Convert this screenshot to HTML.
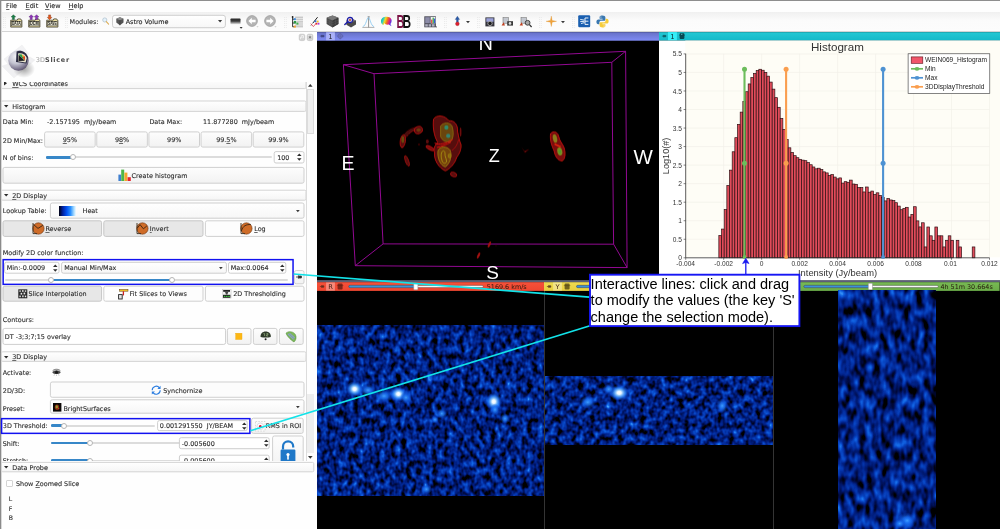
<!DOCTYPE html><html><head><meta charset="utf-8"><title>3D Slicer</title><style>
html,body{margin:0;padding:0}
body{width:1000px;height:529px;position:relative;overflow:hidden;background:#fefefe;font-family:"DejaVu Sans","Liberation Sans",sans-serif;font-size:6.43px;color:#2a2a2a}
.a{position:absolute;box-sizing:border-box}
.t{position:absolute;white-space:nowrap;line-height:10px;height:10px;-webkit-text-stroke:0.1px currentColor}
.btn{position:absolute;box-sizing:border-box;border:1px solid #d2d2d2;border-radius:2px;background:linear-gradient(#fdfdfd,#f3f3f3)}
.btn.on{background:#e3e3e3;border-color:#c4c4c4}
.in{position:absolute;box-sizing:border-box;border:1px solid #d0d0d0;border-radius:2px;background:#fff}
.hd{position:absolute;box-sizing:border-box;border:1px solid #d6d6d6;border-radius:1.5px;background:linear-gradient(#fff,#f6f6f6)}
.trk{position:absolute;height:2px;border-radius:1px;background:#dcdcdc}
.fil{position:absolute;height:2.6px;border-radius:1.2px;background:#3787c8}
.knob{position:absolute;width:6px;height:6px;border-radius:50%;background:#fff;border:1px solid #b4b4b4;box-sizing:border-box}
u{text-decoration:underline;text-decoration-thickness:0.6px;text-underline-offset:1px;text-decoration-color:#6a6a6a}
svg{position:absolute;overflow:visible}
</style></head><body><div style="position:absolute;left:0;top:0;width:1000px;height:529px;will-change:transform">
<svg style="left:0;top:0" width="0" height="0"><defs><linearGradient id="gB" x1="0" y1="0" x2="0" y2="1"><stop offset="0" stop-color="#fdfdfd"/><stop offset="1" stop-color="#f2f2f2"/></linearGradient><linearGradient id="gI" x1="0" y1="0" x2="0" y2="1"><stop offset="0" stop-color="#ffffff"/><stop offset="1" stop-color="#f7f7f7"/></linearGradient><linearGradient id="gH" x1="0" y1="0" x2="0" y2="1"><stop offset="0" stop-color="#ffffff"/><stop offset="1" stop-color="#f5f5f5"/></linearGradient></defs></svg>
<div class="a" style="left:0px;top:0px;width:1000px;height:1px;background:#8e8e8e"></div>
<div class="a" style="left:0px;top:1px;width:1px;height:528px;background:#8a8a8a"></div>
<div class="a" style="left:1px;top:1px;width:1px;height:528px;background:#d9d9d9"></div>
<div class="t" style="left:6.1px;top:1.3000000000000007px;font-size:6.5px;color:#1e1e1e"><u>F</u>ile</div>
<div class="t" style="left:25.6px;top:1.3000000000000007px;font-size:6.5px;color:#1e1e1e"><u>E</u>dit</div>
<div class="t" style="left:45.1px;top:1.3000000000000007px;font-size:6.5px;color:#1e1e1e"><u>V</u>iew</div>
<div class="t" style="left:68.6px;top:1.3000000000000007px;font-size:6.5px;color:#1e1e1e"><u>H</u>elp</div>
<div class="a" style="left:2px;top:11.6px;width:998px;height:19.4px;background:linear-gradient(#f0f0f0,#fbfbfb 45%,#fcfcfc)"></div>
<div class="a" style="left:2px;top:31px;width:998px;height:1px;background:#d4d4d4"></div>
<svg style="left:3px;top:16.5px" width="3" height="11" viewBox="0 0 3 11"><g fill="#e6e6e6"><rect x="0" y="0" width="0.9" height="0.9"/><rect x="0" y="2" width="0.9" height="0.9"/><rect x="0" y="4" width="0.9" height="0.9"/><rect x="0" y="6" width="0.9" height="0.9"/><rect x="0" y="8" width="0.9" height="0.9"/><rect x="0" y="10" width="0.9" height="0.9"/><rect x="1.8" y="0" width="0.9" height="0.9"/><rect x="1.8" y="2" width="0.9" height="0.9"/><rect x="1.8" y="4" width="0.9" height="0.9"/><rect x="1.8" y="6" width="0.9" height="0.9"/><rect x="1.8" y="8" width="0.9" height="0.9"/><rect x="1.8" y="10" width="0.9" height="0.9"/></g></svg>
<svg style="left:65px;top:16.5px" width="3" height="11" viewBox="0 0 3 11"><g fill="#e6e6e6"><rect x="0" y="0" width="0.9" height="0.9"/><rect x="0" y="2" width="0.9" height="0.9"/><rect x="0" y="4" width="0.9" height="0.9"/><rect x="0" y="6" width="0.9" height="0.9"/><rect x="0" y="8" width="0.9" height="0.9"/><rect x="0" y="10" width="0.9" height="0.9"/><rect x="1.8" y="0" width="0.9" height="0.9"/><rect x="1.8" y="2" width="0.9" height="0.9"/><rect x="1.8" y="4" width="0.9" height="0.9"/><rect x="1.8" y="6" width="0.9" height="0.9"/><rect x="1.8" y="8" width="0.9" height="0.9"/><rect x="1.8" y="10" width="0.9" height="0.9"/></g></svg>
<svg style="left:283.5px;top:16.5px" width="3" height="11" viewBox="0 0 3 11"><g fill="#e6e6e6"><rect x="0" y="0" width="0.9" height="0.9"/><rect x="0" y="2" width="0.9" height="0.9"/><rect x="0" y="4" width="0.9" height="0.9"/><rect x="0" y="6" width="0.9" height="0.9"/><rect x="0" y="8" width="0.9" height="0.9"/><rect x="0" y="10" width="0.9" height="0.9"/><rect x="1.8" y="0" width="0.9" height="0.9"/><rect x="1.8" y="2" width="0.9" height="0.9"/><rect x="1.8" y="4" width="0.9" height="0.9"/><rect x="1.8" y="6" width="0.9" height="0.9"/><rect x="1.8" y="8" width="0.9" height="0.9"/><rect x="1.8" y="10" width="0.9" height="0.9"/></g></svg>
<svg style="left:416.5px;top:16.5px" width="3" height="11" viewBox="0 0 3 11"><g fill="#e6e6e6"><rect x="0" y="0" width="0.9" height="0.9"/><rect x="0" y="2" width="0.9" height="0.9"/><rect x="0" y="4" width="0.9" height="0.9"/><rect x="0" y="6" width="0.9" height="0.9"/><rect x="0" y="8" width="0.9" height="0.9"/><rect x="0" y="10" width="0.9" height="0.9"/><rect x="1.8" y="0" width="0.9" height="0.9"/><rect x="1.8" y="2" width="0.9" height="0.9"/><rect x="1.8" y="4" width="0.9" height="0.9"/><rect x="1.8" y="6" width="0.9" height="0.9"/><rect x="1.8" y="8" width="0.9" height="0.9"/><rect x="1.8" y="10" width="0.9" height="0.9"/></g></svg>
<svg style="left:443.5px;top:16.5px" width="3" height="11" viewBox="0 0 3 11"><g fill="#e6e6e6"><rect x="0" y="0" width="0.9" height="0.9"/><rect x="0" y="2" width="0.9" height="0.9"/><rect x="0" y="4" width="0.9" height="0.9"/><rect x="0" y="6" width="0.9" height="0.9"/><rect x="0" y="8" width="0.9" height="0.9"/><rect x="0" y="10" width="0.9" height="0.9"/><rect x="1.8" y="0" width="0.9" height="0.9"/><rect x="1.8" y="2" width="0.9" height="0.9"/><rect x="1.8" y="4" width="0.9" height="0.9"/><rect x="1.8" y="6" width="0.9" height="0.9"/><rect x="1.8" y="8" width="0.9" height="0.9"/><rect x="1.8" y="10" width="0.9" height="0.9"/></g></svg>
<svg style="left:476.5px;top:16.5px" width="3" height="11" viewBox="0 0 3 11"><g fill="#e6e6e6"><rect x="0" y="0" width="0.9" height="0.9"/><rect x="0" y="2" width="0.9" height="0.9"/><rect x="0" y="4" width="0.9" height="0.9"/><rect x="0" y="6" width="0.9" height="0.9"/><rect x="0" y="8" width="0.9" height="0.9"/><rect x="0" y="10" width="0.9" height="0.9"/><rect x="1.8" y="0" width="0.9" height="0.9"/><rect x="1.8" y="2" width="0.9" height="0.9"/><rect x="1.8" y="4" width="0.9" height="0.9"/><rect x="1.8" y="6" width="0.9" height="0.9"/><rect x="1.8" y="8" width="0.9" height="0.9"/><rect x="1.8" y="10" width="0.9" height="0.9"/></g></svg>
<svg style="left:538.5px;top:16.5px" width="3" height="11" viewBox="0 0 3 11"><g fill="#e6e6e6"><rect x="0" y="0" width="0.9" height="0.9"/><rect x="0" y="2" width="0.9" height="0.9"/><rect x="0" y="4" width="0.9" height="0.9"/><rect x="0" y="6" width="0.9" height="0.9"/><rect x="0" y="8" width="0.9" height="0.9"/><rect x="0" y="10" width="0.9" height="0.9"/><rect x="1.8" y="0" width="0.9" height="0.9"/><rect x="1.8" y="2" width="0.9" height="0.9"/><rect x="1.8" y="4" width="0.9" height="0.9"/><rect x="1.8" y="6" width="0.9" height="0.9"/><rect x="1.8" y="8" width="0.9" height="0.9"/><rect x="1.8" y="10" width="0.9" height="0.9"/></g></svg>
<svg style="left:571.5px;top:16.5px" width="3" height="11" viewBox="0 0 3 11"><g fill="#e6e6e6"><rect x="0" y="0" width="0.9" height="0.9"/><rect x="0" y="2" width="0.9" height="0.9"/><rect x="0" y="4" width="0.9" height="0.9"/><rect x="0" y="6" width="0.9" height="0.9"/><rect x="0" y="8" width="0.9" height="0.9"/><rect x="0" y="10" width="0.9" height="0.9"/><rect x="1.8" y="0" width="0.9" height="0.9"/><rect x="1.8" y="2" width="0.9" height="0.9"/><rect x="1.8" y="4" width="0.9" height="0.9"/><rect x="1.8" y="6" width="0.9" height="0.9"/><rect x="1.8" y="8" width="0.9" height="0.9"/><rect x="1.8" y="10" width="0.9" height="0.9"/></g></svg>
<svg style="left:9.8px;top:14.4px" width="12.6" height="14" viewBox="0 0 12.6 14"><path d="M0.7 13.1V6.2H7.2L7.8 4.9H10.6L11.4 6.2H11.9V13.1Z" fill="#e9dc9c" stroke="#4c4838" stroke-width="0.85"/><rect x="1.5" y="7.5" width="9.6" height="4.4" fill="#efecd8" stroke="#3a3a34" stroke-width="0.55"/><text x="6.3" y="11.4" font-size="4.9" font-family="Liberation Sans,sans-serif" font-weight="bold" text-anchor="middle" fill="#111" textLength="8.6" lengthAdjust="spacingAndGlyphs">DATA</text><path d="M3.4 0.7L5.699999999999999 3L4.4 3.1V5.5H2.4V3.1L1.1 3Z" fill="#1a8048" stroke="#0c4a26" stroke-width="0.4"/></svg>
<svg style="left:27.8px;top:14.4px" width="12.6" height="14" viewBox="0 0 12.6 14"><path d="M0.7 13.1V6.2H7.2L7.8 4.9H10.6L11.4 6.2H11.9V13.1Z" fill="#e9dc9c" stroke="#4c4838" stroke-width="0.85"/><rect x="1.5" y="7.5" width="9.6" height="4.4" fill="#efecd8" stroke="#3a3a34" stroke-width="0.55"/><text x="6.3" y="11.4" font-size="4.9" font-family="Liberation Sans,sans-serif" font-weight="bold" text-anchor="middle" fill="#111" textLength="8.6" lengthAdjust="spacingAndGlyphs">DCM</text><path d="M3.2 0.7L5.5 3L4.2 3.1V5.5H2.2V3.1L0.9000000000000004 3Z" fill="#8e35b8" stroke="#521870" stroke-width="0.4"/><path d="M8.6 0.7L10.899999999999999 3L9.6 3.1V5.5H7.6V3.1L6.3 3Z" fill="#8e35b8" stroke="#521870" stroke-width="0.4"/></svg>
<svg style="left:45.8px;top:14.4px" width="12.6" height="14" viewBox="0 0 12.6 14"><path d="M0.7 13.1V6.2H7.2L7.8 4.9H10.6L11.4 6.2H11.9V13.1Z" fill="#e9dc9c" stroke="#4c4838" stroke-width="0.85"/><rect x="1.5" y="7.5" width="9.6" height="4.4" fill="#efecd8" stroke="#3a3a34" stroke-width="0.55"/><text x="6.3" y="11.4" font-size="4.9" font-family="Liberation Sans,sans-serif" font-weight="bold" text-anchor="middle" fill="#111" textLength="8.6" lengthAdjust="spacingAndGlyphs">SAVE</text><path d="M3.6 5.7L1.3000000000000003 3.4L2.6 3.3V0.9H4.6V3.3L5.9 3.4Z" fill="#e8581c" stroke="#7a2a08" stroke-width="0.4"/></svg>
<div class="t" style="left:69.6px;top:17.4px;font-size:6.45px;color:#333">Modules:</div>
<svg style="left:101.8px;top:17px" width="7.8" height="8.7" viewBox="0 0 9 10"><circle cx="3.2" cy="3.4" r="2.4" fill="#e4f2fb" stroke="#a9bccb" stroke-width="0.8"/><path d="M5 5.3L7.6 8.2" stroke="#dcae58" stroke-width="1.3" stroke-linecap="round"/></svg>
<svg style="left:111px;top:14px" width="116" height="15" viewBox="0 0 116 15"><rect x="1.50" y="1.30" width="112.90" height="12.40" rx="2.4" fill="url(#gI)" stroke="#cbcbcb" stroke-width="0.95"/></svg>
<svg style="left:115.6px;top:17px" width="7.8" height="8.6" viewBox="0 0 9 10"><path d="M4.5 0.3L8.7 2V6.4L4.5 9.7L0.3 6.4V2Z" fill="#555"/><path d="M4.5 0.3L8.7 2L4.5 3.8L0.3 2Z" fill="#8c8c8c"/><path d="M4.5 3.8V9.7" stroke="#2a2a2a" stroke-width="0.5"/></svg>
<div class="t" style="left:125.69999999999999px;top:17.200000000000003px;font-size:6.45px;color:#222">Astro Volume</div>
<svg style="left:217.71px;top:20.46px" width="4.18" height="2.4699999999999998" viewBox="0 0 4.4 2.6"><path d="M0 0H4.4L2.2 2.6Z" fill="#3a3a3a"/></svg>
<svg style="left:229.5px;top:17.5px" width="14" height="12" viewBox="0 0 14 12"><defs><linearGradient id="hg" x1="0" y1="0" x2="0" y2="1"><stop offset="0" stop-color="#2a2a2a"/><stop offset="0.45" stop-color="#3a3a3a"/><stop offset="1" stop-color="#e4e4e4"/></linearGradient></defs><rect x="0.5" y="0.6" width="10" height="5.6" rx="0.6" fill="url(#hg)"/><path d="M9.6 9H12.6L11.1 10.8Z" fill="#333"/></svg>
<svg style="left:246px;top:15px" width="14" height="14" viewBox="0 0 14 14"><circle cx="6" cy="6" r="5.4" fill="#b4b4b4" stroke="#9a9a9a" stroke-width="0.7"/><g ><path d="M2.4 6L5.8 2.8V4.8H9.6V7.2H5.8V9.2Z" fill="#fff"/></g><path d="M10.4 11.2H12.6L11.5 12.4Z" fill="#c8c8c8"/></svg>
<svg style="left:264px;top:15px" width="14" height="14" viewBox="0 0 14 14"><circle cx="6" cy="6" r="5.4" fill="#b4b4b4" stroke="#9a9a9a" stroke-width="0.7"/><g transform="translate(12,0) scale(-1,1)"><path d="M2.4 6L5.8 2.8V4.8H9.6V7.2H5.8V9.2Z" fill="#fff"/></g><path d="M10.4 11.2H12.6L11.5 12.4Z" fill="#c8c8c8"/></svg>
<svg style="left:290.5px;top:15.5px" width="13" height="12" viewBox="0 0 13 12"><path d="M1.6 0.6V10.8H3.4M1.6 3.2H3.4M1.6 7H3.4" stroke="#222" stroke-width="0.9" fill="none"/><circle cx="1.6" cy="1" r="0.9" fill="#222"/><g stroke="#9a9a9a" stroke-width="0.7"><path d="M4 1.2H12M4 3.2H12M5.6 5.2H12M5.6 7H12M4 9H12M4 10.8H12"/></g><rect x="2.8" y="2.2" width="2" height="2" fill="#3a8be0"/><rect x="2.8" y="5" width="2.4" height="2.6" fill="#2e9a44"/><rect x="5.4" y="6.6" width="2" height="2" fill="#40b050"/><rect x="2.8" y="9.6" width="2" height="2" fill="#f0a030"/></svg>
<svg style="left:309.5px;top:16px" width="11" height="12" viewBox="0 0 11 12"><path d="M1 9.4L7.6 1.2" stroke="#222" stroke-width="1"/><path d="M0.8 7.6L3.4 10.6L6.4 7" stroke="#e04050" stroke-width="0.8" fill="#fff"/><rect x="4.6" y="4.4" width="1.8" height="1.8" fill="#2a6ae0"/><rect x="6.8" y="4.6" width="1.8" height="1.8" fill="#f0c020"/><rect x="5.6" y="6.8" width="1.8" height="1.8" fill="#e03030"/><rect x="7.8" y="6.8" width="1.6" height="1.8" fill="#b030e0"/></svg>
<svg style="left:326px;top:14.8px" width="13" height="13" viewBox="0 0 13 13"><path d="M6.5 0.4L12.4 2.8V9L6.5 12.6L0.6 9V2.8Z" fill="#4c4c4c"/><path d="M6.5 0.4L12.4 2.8L6.5 5.4L0.6 2.8Z" fill="#7a7a7a"/><path d="M6.5 5.4V12.6L12.4 9V2.8Z" fill="#3a3a3a"/><path d="M0.6 5L6.5 7.6L12.4 5M0.6 7L6.5 9.8L12.4 7M3.4 1.6V10.8M9.6 1.6V10.8" stroke="#666" stroke-width="0.35" fill="none"/></svg>
<svg style="left:344px;top:15.5px" width="13" height="13" viewBox="0 0 13 13"><path d="M7 2.6L12 4.4V8.6L7 11.6L2.4 8.8V4.4Z" fill="#4a4a4a"/><path d="M7 2.6L12 4.4L7 6.4L2.4 4.4Z" fill="#777"/><circle cx="6" cy="4" r="2.7" fill="#c9c9d6" stroke="#1a1aa8" stroke-width="1.2"/><circle cx="6" cy="4" r="0.9" fill="#c03030"/><path d="M3.8 5.8L0.8 8.6" stroke="#1a1aa8" stroke-width="1.4" stroke-linecap="round"/></svg>
<svg style="left:361.5px;top:15.5px" width="13" height="13" viewBox="0 0 13 13"><path d="M0.4 11.4H12.4" stroke="#9a9a9a" stroke-width="0.8"/><path d="M6.6 0.8V11.4" stroke="#777" stroke-width="0.8"/><path d="M5.6 0.9H7.8" stroke="#444" stroke-width="0.6"/><path d="M0.8 10.6C4 10 4.8 1.6 6.4 1.6C8 1.6 8.8 10 12 10.6" stroke="#8ecbf0" stroke-width="0.9" fill="none"/></svg>
<svg style="left:379.5px;top:15.5px" width="13" height="12" viewBox="0 0 13 12"><defs><linearGradient id="rb" x1="0" y1="0" x2="1" y2="0.3"><stop offset="0" stop-color="#20c040"/><stop offset="0.25" stop-color="#20c8d8"/><stop offset="0.45" stop-color="#f0e020"/><stop offset="0.65" stop-color="#f07020"/><stop offset="0.85" stop-color="#e02080"/><stop offset="1" stop-color="#6030e0"/></linearGradient></defs><path d="M1 5.2C1 2 4 0.6 7 0.8C10.6 1 12.4 3.4 11.4 6.2C11 7.4 10.2 7.6 10.6 8.6L11.6 10.2L8.6 8.6C6.4 9 5 8.2 4.2 7L3.6 9L2.4 8.6C1.4 7.6 1 6.4 1 5.2Z" fill="url(#rb)"/></svg>
<svg style="left:396.5px;top:15px" width="15" height="14" viewBox="0 0 15 14"><text x="-0.4" y="12.9" font-size="17.6" font-weight="bold" font-family="Liberation Sans,sans-serif" fill="#7a1244" textLength="8" lengthAdjust="spacingAndGlyphs">B</text><text x="5.6" y="12.9" font-size="17.6" font-weight="bold" font-family="Liberation Sans,sans-serif" fill="#111" textLength="8.6" lengthAdjust="spacingAndGlyphs">B</text></svg>
<svg style="left:424px;top:16px" width="13" height="12" viewBox="0 0 13 12"><rect x="0.3" y="0.3" width="11.6" height="11" fill="#4a4a56"/><rect x="1.2" y="1.2" width="4.6" height="6" fill="#8c8ca8"/><rect x="6.6" y="1" width="4.8" height="6.4" fill="#f4f4f4"/><rect x="7.2" y="3.6" width="1.2" height="3.6" fill="#e03030"/><rect x="8.6" y="1.6" width="1.2" height="5.6" fill="#30a040"/><rect x="10" y="2.6" width="1.2" height="4.6" fill="#3060e0"/><rect x="1.2" y="8.2" width="2.6" height="2.4" fill="#b0b0c0"/><rect x="4.6" y="8.2" width="2.6" height="2.4" fill="#b0b0c0"/><rect x="8" y="8.2" width="2.6" height="2.4" fill="#b0b0c0"/><path d="M11.6 10.6H13L12.3 11.8Z" fill="#333"/></svg>
<svg style="left:453.5px;top:15.8px" width="7" height="11" viewBox="0 0 7 11"><path d="M3.4 0.2L5.6 3.4H4.3V6.6H2.5V3.4H1.2Z" fill="#2a5aa8" stroke="#183a78" stroke-width="0.3"/><circle cx="3.4" cy="7.8" r="1.9" fill="#e02030" stroke="#8a1018" stroke-width="0.3"/></svg>
<svg style="left:465.82px;top:20.72px" width="3.9600000000000004" height="2.3400000000000003" viewBox="0 0 4.4 2.6"><path d="M0 0H4.4L2.2 2.6Z" fill="#3a3a3a"/></svg>
<svg style="left:484.5px;top:16.5px" width="10" height="10" viewBox="0 0 10 10"><rect x="0.4" y="0.4" width="9" height="9" fill="#34343c"/><rect x="1.3" y="1.2" width="7.2" height="3.6" fill="#9aa0d8"/><circle cx="5" cy="6.4" r="2.2" fill="#1c1c1c" stroke="#c8c8c8" stroke-width="0.7"/></svg>
<svg style="left:500.5px;top:16.5px" width="13" height="10" viewBox="0 0 13 10"><rect x="2" y="0.6" width="5.4" height="5.6" fill="#c4c8d0" stroke="#666" stroke-width="0.5"/><path d="M0.6 8.6L2.6 5.2L4 8.6Z" fill="#c04020"/><rect x="6.2" y="4.2" width="5.8" height="4.4" fill="#3a3a3a"/><circle cx="9" cy="6.4" r="1.3" fill="#ddd"/></svg>
<svg style="left:518.5px;top:16.5px" width="14" height="11" viewBox="0 0 14 11"><rect x="2" y="0.6" width="5.4" height="5.6" fill="#c4c8d0" stroke="#666" stroke-width="0.5"/><path d="M0.6 8.6L2.6 5.2L4 8.6Z" fill="#c04020"/><circle cx="8.6" cy="5.8" r="2.4" fill="#aaa" stroke="#333" stroke-width="0.9"/><path d="M10.4 7.6L12.6 10" stroke="#333" stroke-width="1.3"/></svg>
<svg style="left:546.3px;top:16.4px" width="10.6" height="10.6" viewBox="0 0 12 12"><path d="M6 0L7 5L12 6L7 7L6 12L5 7L0 6L5 5Z" fill="#f0a23a" stroke="#d88a22" stroke-width="0.3"/></svg>
<svg style="left:560.62px;top:20.72px" width="3.9600000000000004" height="2.3400000000000003" viewBox="0 0 4.4 2.6"><path d="M0 0H4.4L2.2 2.6Z" fill="#3a3a3a"/></svg>
<svg style="left:578px;top:15.3px" width="12.4" height="12.4" viewBox="0 0 12.4 12.4"><rect x="0.2" y="0.2" width="12" height="12" rx="1.2" fill="#1a5fb0"/><path d="M2.2 4.4L6.4 5.2M2.2 6.6L6.4 6.4M3 8.6L6.4 7.6" stroke="#d8e8f8" stroke-width="1"/><path d="M7 3H10.4M7 6.2H10.4M7 9.4H10.4M7 3V9.4" stroke="#fff" stroke-width="0.9" fill="none"/></svg>
<svg style="left:595.5px;top:15px" width="13" height="13" viewBox="0 0 13 13"><path d="M6.4 0.4C3.6 0.4 3.6 1.6 3.6 2.4V3.8H6.6V4.4H2.4C1 4.4 0.4 5.4 0.4 6.8C0.4 8.2 1 9.2 2.2 9.2H3.4V7.6C3.4 6.4 4.2 5.8 5.2 5.8H8.2C9 5.8 9.4 5.2 9.4 4.4V2.4C9.4 1.2 8.4 0.4 6.4 0.4Z" fill="#3a78b0"/><path d="M6.6 12.6C9.4 12.6 9.4 11.4 9.4 10.6V9.2H6.4V8.6H10.6C12 8.6 12.6 7.6 12.6 6.2C12.6 4.8 12 3.8 10.8 3.8H9.6V5.4C9.6 6.6 8.8 7.2 7.8 7.2H4.8C4 7.2 3.6 7.8 3.6 8.6V10.6C3.6 11.8 4.6 12.6 6.6 12.6Z" fill="#f6cc3a"/><circle cx="4.9" cy="2" r="0.55" fill="#fff"/><circle cx="8.1" cy="11" r="0.55" fill="#fff"/></svg>
<svg style="left:298px;top:33px" width="16" height="9" viewBox="298 33 16 9"><rect x="299.2" y="34.2" width="5.6" height="6.4" rx="1.5" fill="#d2d2d2" stroke="#b4b4b4" stroke-width="0.5"/><path d="M300.6 39.2V37.2H302.2M301.6 36.6V35.6H303.4V37.8H302.6" stroke="#fff" stroke-width="0.7" fill="none"/><rect x="307.2" y="34.2" width="5.6" height="6.4" rx="1.5" fill="#d2d2d2" stroke="#b0b0b0" stroke-width="0.5"/><path d="M308.4 35.6L311.6 39.2M311.6 35.6L308.4 39.2" stroke="#fff" stroke-width="1.2"/><path d="M308.9 36.1L311.1 38.7M311.1 36.1L308.9 38.7" stroke="#3a3a3a" stroke-width="0.7"/></svg>
<svg style="left:2px;top:44px" width="40" height="38" viewBox="0 0 40 38">
<defs><radialGradient id="sp" cx="0.38" cy="0.3" r="0.8"><stop offset="0" stop-color="#f4f4f8"/><stop offset="0.45" stop-color="#c4c4d2"/><stop offset="0.8" stop-color="#77708a"/><stop offset="1" stop-color="#4a4056"/></radialGradient>
<radialGradient id="sh" cx="0.5" cy="0.5" r="0.5"><stop offset="0" stop-color="#000" stop-opacity="0.35"/><stop offset="1" stop-color="#000" stop-opacity="0"/></radialGradient></defs>
<path d="M2 15L20 1L27 10L10 25Z" fill="#e4e4e8" opacity="0.45" stroke="#c8c8cc" stroke-width="0.3"/><path d="M0 22L28 13L33 16L12 34Z" fill="#dcdce0" opacity="0.4" stroke="#c8c8cc" stroke-width="0.3"/>
<ellipse cx="22" cy="25" rx="11" ry="9" fill="url(#sh)"/>
<circle cx="16.5" cy="16.5" r="10.2" fill="url(#sp)"/>
<path d="M14.6 7.4C19 5.6 24.6 8.2 26 13.6L24.4 19.6L14 18Z" fill="#2a2a40"/>
<path d="M16 9.6C19.6 8.6 23.6 10.6 24.8 14L23.6 18.4L16 17.2Z" fill="#e8e4d0"/>
<path d="M16.6 10.6L22.8 16.8L16.4 17Z" fill="#1e1e22"/><path d="M16.6 10.6L19.6 10.2L22.8 16.8Z" fill="#2aa048"/><path d="M19.6 10.2L23 12.4L22.8 16.8Z" fill="#f0a020"/><path d="M20.6 13L23 12.4L22.8 16.8Z" fill="#e04020"/>
</svg>
<div class="t" style="left:35.800000000000004px;top:54.9px;font-size:6.45px;color:#a8a8a8;letter-spacing:0.2px;font-family:"Liberation Sans",sans-serif">3D</div>
<div class="t" style="left:45.0px;top:54.9px;font-size:6.5px;color:#484848;font-weight:bold;letter-spacing:0.7px;-webkit-text-stroke:0;font-family:"Liberation Sans",sans-serif">Slicer</div>
<div class="a" style="left:0px;top:81.5px;width:316px;height:379.8px;overflow:hidden"><div class="a" style="left:0px;top:-81.5px;width:316px;height:600px">
<svg style="left:0px;top:77px" width="307" height="13" viewBox="0 0 307 13"><rect x="1.40" y="1.60" width="304.60" height="10.00" rx="1.3" fill="url(#gH)" stroke="#d2d2d2" stroke-width="0.95"/></svg>
<svg style="left:4.4px;top:81.39999999999999px" width="3" height="4.4" viewBox="0 0 3 4.4"><path d="M0 0V4.4L3 2.2Z" fill="#2a2a2a"/></svg>
<div class="t" style="left:12.2px;top:79.3px;font-size:6.45px"><u>W</u>CS Coordinates</div>
<svg style="left:0px;top:100px" width="307" height="13" viewBox="0 0 307 13"><rect x="1.40" y="1.00" width="304.60" height="10.40" rx="1.3" fill="url(#gH)" stroke="#d2d2d2" stroke-width="0.95"/></svg>
<svg style="left:3.7px;top:105.2px" width="4.4" height="2.6" viewBox="0 0 4.4 2.6"><path d="M0 0H4.4L2.2 2.6Z" fill="#2a2a2a"/></svg>
<div class="t" style="left:12.2px;top:101.9px;font-size:6.45px">Histogram</div>
<div class="t" style="left:2.8000000000000003px;top:117.30000000000001px;">Data Min:</div>
<div class="t" style="left:47.0px;top:117.30000000000001px;">-2.157195&nbsp; mJy/beam</div>
<div class="t" style="left:149.4px;top:117.30000000000001px;">Data Max:</div>
<div class="t" style="left:203.0px;top:117.30000000000001px;">11.877280&nbsp; mJy/beam</div>
<div class="t" style="left:2.8000000000000003px;top:135.6px;">2D Min/Max:</div>
<svg style="left:43px;top:130px" width="54" height="19" viewBox="0 0 54 19"><rect x="1.60" y="1.90" width="50.60" height="15.20" rx="1.8" fill="url(#gB)" stroke="#cdcdcd" stroke-width="0.95"/></svg>
<div class="t" style="left:44.6px;width:50.6px;top:134.9px;text-align:center"><u>9</u>5%</div>
<svg style="left:95px;top:130px" width="54" height="19" viewBox="0 0 54 19"><rect x="1.75" y="1.90" width="50.60" height="15.20" rx="1.8" fill="url(#gB)" stroke="#cdcdcd" stroke-width="0.95"/></svg>
<div class="t" style="left:96.75px;width:50.599999999999994px;top:134.9px;text-align:center">9<u>8</u>%</div>
<svg style="left:147px;top:130px" width="54" height="19" viewBox="0 0 54 19"><rect x="1.90" y="1.90" width="50.60" height="15.20" rx="1.8" fill="url(#gB)" stroke="#cdcdcd" stroke-width="0.95"/></svg>
<div class="t" style="left:148.9px;width:50.599999999999994px;top:134.9px;text-align:center">99%</div>
<svg style="left:200px;top:130px" width="53" height="19" viewBox="0 0 53 19"><rect x="1.05" y="1.90" width="50.60" height="15.20" rx="1.8" fill="url(#gB)" stroke="#cdcdcd" stroke-width="0.95"/></svg>
<div class="t" style="left:201.04999999999998px;width:50.599999999999994px;top:134.9px;text-align:center">99.<u>5</u>%</div>
<svg style="left:252px;top:130px" width="53" height="19" viewBox="0 0 53 19"><rect x="1.20" y="1.90" width="50.60" height="15.20" rx="1.8" fill="url(#gB)" stroke="#cdcdcd" stroke-width="0.95"/></svg>
<div class="t" style="left:253.2px;width:50.60000000000002px;top:134.9px;text-align:center">99.9%</div>
<div class="t" style="left:2.8000000000000003px;top:153.0px;">N of bins:</div>
<div class="trk" style="left:45.5px;top:156.4px;width:226.5px"></div>
<div class="fil" style="left:45.5px;top:156.1px;width:27.099999999999994px"></div>
<div class="knob" style="left:69.6px;top:154.4px"></div>
<svg style="left:273px;top:150px" width="32" height="14" viewBox="0 0 32 14"><rect x="1.20" y="1.60" width="29.80" height="11.40" rx="1.8" fill="#fff" stroke="#cbcbcb" stroke-width="0.95"/></svg>
<div class="t" style="left:277.20000000000005px;top:153.0px;">100</div>
<svg style="left:296.5px;top:153.3px" width="4.6" height="8.2" viewBox="0 0 4 7.2"><path d="M0 2.6L2 0.4L4 2.6ZM0 4.6L2 6.8L4 4.6Z" fill="#2e2e2e"/></svg>
<svg style="left:2px;top:166px" width="303" height="19" viewBox="0 0 303 19"><rect x="1.00" y="1.40" width="301.00" height="15.80" rx="1.8" fill="url(#gB)" stroke="#cdcdcd" stroke-width="0.95"/></svg>
<svg style="left:118px;top:169px" width="14" height="12.4" viewBox="0 0 14 12.4"><rect x="0.4" y="5.6" width="2.6" height="6.4" fill="#3f7fd0"/><rect x="3.2" y="0.6" width="3" height="11.4" fill="#4cb648"/><rect x="6.4" y="3.6" width="3" height="8.4" fill="#f2a62c"/><rect x="9.6" y="8.2" width="3.2" height="3.8" fill="#e4242c"/></svg>
<div class="t" style="left:131.6px;top:170.8px;">Create histogram</div>
<svg style="left:0px;top:189px" width="307" height="13" viewBox="0 0 307 13"><rect x="1.40" y="1.20" width="304.60" height="10.00" rx="1.3" fill="url(#gH)" stroke="#d2d2d2" stroke-width="0.95"/></svg>
<svg style="left:3.7px;top:194.2px" width="4.4" height="2.6" viewBox="0 0 4.4 2.6"><path d="M0 0H4.4L2.2 2.6Z" fill="#2a2a2a"/></svg>
<div class="t" style="left:12.2px;top:190.9px;font-size:6.45px"><u>2</u>D Display</div>
<div class="t" style="left:2.8000000000000003px;top:206.20000000000002px;">Lookup Table:</div>
<svg style="left:49px;top:202px" width="256" height="18" viewBox="0 0 256 18"><rect x="1.40" y="1.00" width="253.60" height="15.20" rx="1.8" fill="url(#gI)" stroke="#cbcbcb" stroke-width="0.95"/></svg>
<div class="a" style="left:58.8px;top:205.6px;width:17.200000000000003px;height:10.800000000000011px;background:linear-gradient(90deg,#000010 0%,#0020a0 22%,#0050f0 45%,#2a90ff 68%,#a8dcff 88%,#f4fbff 100%)"></div>
<div class="t" style="left:82.6px;top:206.20000000000002px;">Heat</div>
<svg style="left:296.33px;top:209.78px" width="3.74" height="2.21" viewBox="0 0 4.4 2.6"><path d="M0 0H4.4L2.2 2.6Z" fill="#3a3a3a"/></svg>
<svg style="left:2px;top:219px" width="101" height="19" viewBox="0 0 101 19"><rect x="1.00" y="1.80" width="98.60" height="15.60" rx="1.8" fill="#e7e7e7" stroke="#c4c4c4" stroke-width="0.95"/></svg>
<svg style="left:31.6px;top:222px" width="13" height="13" viewBox="0 0 13 13"><circle cx="6.4" cy="6.5" r="5.7" fill="#cf6c28" stroke="#6a3410" stroke-width="0.6"/><path d="M1 1V11.6H5" stroke="#3a2a1a" stroke-width="0.9" fill="none"/><path d="M1.4 2.4L6 6.4L10.8 3.4" stroke="#3a2412" stroke-width="0.9" fill="none"/></svg>
<div class="t" style="left:45.4px;top:224.20000000000002px;"><u>R</u>everse</div>
<svg style="left:102px;top:219px" width="102" height="19" viewBox="0 0 102 19"><rect x="1.80" y="1.80" width="99.20" height="15.60" rx="1.8" fill="#e7e7e7" stroke="#c4c4c4" stroke-width="0.95"/></svg>
<svg style="left:136px;top:222px" width="13" height="13" viewBox="0 0 13 13"><circle cx="6.4" cy="6.5" r="5.7" fill="#cf6c28" stroke="#6a3410" stroke-width="0.6"/><path d="M1 1V11.6H5" stroke="#3a2a1a" stroke-width="0.9" fill="none"/><path d="M1.4 6L4 2.6L7.4 6.8L10.8 4" stroke="#3a2412" stroke-width="0.9" fill="none"/></svg>
<div class="t" style="left:149.79999999999998px;top:224.20000000000002px;"><u>I</u>nvert</div>
<svg style="left:204px;top:219px" width="101" height="19" viewBox="0 0 101 19"><rect x="1.40" y="1.80" width="98.60" height="15.60" rx="1.8" fill="#fdfdfd" stroke="#cdcdcd" stroke-width="0.95"/></svg>
<svg style="left:240.4px;top:222px" width="13" height="13" viewBox="0 0 13 13"><circle cx="6.4" cy="6.5" r="5.7" fill="#cf6c28" stroke="#6a3410" stroke-width="0.6"/><path d="M1 1V11.6H5" stroke="#3a2a1a" stroke-width="0.9" fill="none"/><path d="M1.4 9C3 3.6 6 2.6 10.8 2.4" stroke="#3a2412" stroke-width="0.9" fill="none"/></svg>
<div class="t" style="left:254.2px;top:224.20000000000002px;"><u>L</u>og</div>
<div class="t" style="left:2.8000000000000003px;top:247.6px;">Modify 2D color function:</div>
<svg style="left:0;top:0" width="316" height="529" viewBox="0 0 316 529"><rect x="3.15" y="259.65" width="289.9" height="24.7" fill="none" stroke="#1212f0" stroke-width="1.5"/></svg>
<svg style="left:3px;top:261px" width="57" height="14" viewBox="0 0 57 14"><rect x="1.60" y="1.30" width="54.40" height="10.90" rx="1.8" fill="#fff" stroke="#cbcbcb" stroke-width="0.95"/></svg>
<div class="t" style="left:6.8px;top:263.4px;">Min:-0.0009</div>
<svg style="left:52.7px;top:263.7px" width="4.6" height="8.2" viewBox="0 0 4 7.2"><path d="M0 2.6L2 0.4L4 2.6ZM0 4.6L2 6.8L4 4.6Z" fill="#2e2e2e"/></svg>
<svg style="left:60px;top:261px" width="168" height="14" viewBox="0 0 168 14"><rect x="1.60" y="1.30" width="164.80" height="10.90" rx="1.8" fill="url(#gI)" stroke="#cbcbcb" stroke-width="0.95"/></svg>
<div class="t" style="left:64.19999999999999px;top:263.29999999999995px;">Manual Min/Max</div>
<svg style="left:218.73px;top:266.98px" width="3.74" height="2.21" viewBox="0 0 4.4 2.6"><path d="M0 0H4.4L2.2 2.6Z" fill="#3a3a3a"/></svg>
<svg style="left:227px;top:261px" width="60" height="14" viewBox="0 0 60 14"><rect x="1.50" y="1.30" width="57.30" height="10.90" rx="1.8" fill="#fff" stroke="#cbcbcb" stroke-width="0.95"/></svg>
<div class="t" style="left:230.79999999999998px;top:263.4px;">Max:0.0064</div>
<svg style="left:279.5px;top:263.7px" width="4.6" height="8.2" viewBox="0 0 4 7.2"><path d="M0 2.6L2 0.4L4 2.6ZM0 4.6L2 6.8L4 4.6Z" fill="#2e2e2e"/></svg>
<div class="trk" style="left:5px;top:279.2px;width:283.4px"></div>
<div class="fil" style="left:50.6px;top:278.9px;width:121.0px"></div>
<div class="knob" style="left:47.6px;top:277.2px"></div>
<div class="knob" style="left:168.6px;top:277.2px"></div>
<svg style="left:293px;top:269px" width="12" height="16" viewBox="0 0 12 16"><rect x="1.40" y="1.60" width="9.60" height="13.20" rx="1.8" fill="url(#gB)" stroke="#cdcdcd" stroke-width="0.95"/></svg>
<svg style="left:296.4px;top:275.4px" width="6" height="4" viewBox="0 0 6 4"><path d="M0 2H2.4M2.4 0.4V3.6M2.4 1H5.4V3H2.4" stroke="#333" stroke-width="0.8" fill="#333"/></svg>
<svg style="left:2px;top:285px" width="101" height="18" viewBox="0 0 101 18"><rect x="1.00" y="1.20" width="98.60" height="15.00" rx="1.8" fill="#e7e7e7" stroke="#c4c4c4" stroke-width="0.95"/></svg>
<svg style="left:17.6px;top:289px" width="9.6" height="9.6" viewBox="0 0 9.6 9.6"><rect x="0.3" y="0.3" width="9" height="9" fill="#2a2a2a"/><g fill="#e8e8e8"><rect x="1.4" y="1.4" width="1.4" height="1.4"/><rect x="4" y="1.2" width="1.6" height="1.6"/><rect x="6.8" y="1.4" width="1.4" height="1.4"/><rect x="2.6" y="3.8" width="1.6" height="1.8"/><rect x="5.6" y="3.6" width="1.6" height="1.8"/><rect x="1.4" y="6.6" width="1.4" height="1.6"/><rect x="4.2" y="6.4" width="1.4" height="1.8"/><rect x="6.8" y="6.6" width="1.4" height="1.6"/></g></svg>
<div class="t" style="left:28.400000000000002px;top:289.29999999999995px;">Slice Interpolation</div>
<svg style="left:102px;top:285px" width="102" height="18" viewBox="0 0 102 18"><rect x="1.80" y="1.20" width="99.20" height="15.00" rx="1.8" fill="#fdfdfd" stroke="#cdcdcd" stroke-width="0.95"/></svg>
<svg style="left:118.4px;top:288.6px" width="10.4" height="10.6" viewBox="0 0 10.4 10.6"><rect x="1.6" y="0.4" width="8.4" height="1.8" fill="#f0c030" stroke="#604010" stroke-width="0.5"/><path d="M5.4 2.2V6.4" stroke="#d02020" stroke-width="1.3"/><rect x="0.6" y="5.6" width="3.6" height="4.4" fill="#e4e4e4" stroke="#222" stroke-width="0.9"/></svg>
<div class="t" style="left:129.6px;top:289.29999999999995px;">Fit Slices to Views</div>
<svg style="left:204px;top:285px" width="101" height="18" viewBox="0 0 101 18"><rect x="1.40" y="1.20" width="98.60" height="15.00" rx="1.8" fill="#fdfdfd" stroke="#cdcdcd" stroke-width="0.95"/></svg>
<svg style="left:222.4px;top:289px" width="9.6" height="9.6" viewBox="0 0 9.6 9.6"><rect x="0.3" y="0.3" width="8.8" height="8.8" fill="#f0f0f0" stroke="#bbb" stroke-width="0.4"/><rect x="1.2" y="1" width="6.8" height="1.8" fill="#222"/><path d="M3 2.8H6.4L5.4 5.4H4Z" fill="#444"/><rect x="1" y="5.8" width="7.4" height="3" fill="#1e1e1e"/><rect x="1.8" y="6.8" width="1.6" height="1.2" fill="#40c040"/><rect x="4" y="6.8" width="1.6" height="1.2" fill="#40c040"/><rect x="6.2" y="6.8" width="1.6" height="1.2" fill="#40c040"/></svg>
<div class="t" style="left:233.2px;top:289.29999999999995px;">2D Thresholding</div>
<div class="t" style="left:2.8000000000000003px;top:314.7px;">Contours:</div>
<svg style="left:2px;top:327px" width="225" height="19" viewBox="0 0 225 19"><rect x="1.00" y="1.40" width="222.60" height="16.00" rx="1.8" fill="#fff" stroke="#cbcbcb" stroke-width="0.95"/></svg>
<div class="t" style="left:4.8px;top:332.0px;">DT -3;3;7;15 overlay</div>
<svg style="left:226px;top:327px" width="26" height="19" viewBox="0 0 26 19"><rect x="1.40" y="1.40" width="23.60" height="16.00" rx="1.8" fill="url(#gB)" stroke="#cdcdcd" stroke-width="0.95"/></svg>
<svg style="left:235px;top:332px" width="8" height="9" viewBox="235 332 8 9"><rect x="235.7" y="333.2" width="6.3" height="6.3" fill="#fdb714" stroke="#eda80e" stroke-width="0.4"/></svg>
<svg style="left:252px;top:327px" width="26" height="19" viewBox="0 0 26 19"><rect x="1.40" y="1.40" width="23.60" height="16.00" rx="1.8" fill="url(#gB)" stroke="#cdcdcd" stroke-width="0.95"/></svg>
<svg style="left:259.6px;top:331.4px" width="11.4" height="10" viewBox="0 0 11.4 10"><path d="M0.6 6C0.2 2.6 2.6 0.5 5.7 0.5C8.8 0.5 11.2 2.6 10.8 6L8.4 6.6H3Z" fill="#2f3a2a"/><path d="M3.4 2.6H4.6V5M6.4 2.6H8V3.8H6.6V5H8" stroke="#a8c890" stroke-width="0.6" fill="none"/><circle cx="5.6" cy="8.2" r="1" fill="#222"/></svg>
<svg style="left:278px;top:327px" width="27" height="19" viewBox="0 0 27 19"><rect x="1.40" y="1.40" width="23.80" height="16.00" rx="1.8" fill="url(#gB)" stroke="#cdcdcd" stroke-width="0.95"/></svg>
<svg style="left:285px;top:330.6px" width="12" height="11.6" viewBox="0 0 12 11.6"><path d="M1 2.2C3.4 -0.4 8.6 0.4 10.4 3.6C11.8 6.4 11 9.4 9 11C6.8 9.6 2.2 6 1 2.2Z" fill="#7db85a" stroke="#4c8a36" stroke-width="0.5"/><path d="M3 3L8.6 8.4M4.6 2.4L9.6 7" stroke="#8a9ad0" stroke-width="1.1"/></svg>
<svg style="left:0px;top:350px" width="307" height="13" viewBox="0 0 307 13"><rect x="1.40" y="1.80" width="304.60" height="9.60" rx="1.3" fill="url(#gH)" stroke="#d2d2d2" stroke-width="0.95"/></svg>
<svg style="left:3.7px;top:355.6px" width="4.4" height="2.6" viewBox="0 0 4.4 2.6"><path d="M0 0H4.4L2.2 2.6Z" fill="#2a2a2a"/></svg>
<div class="t" style="left:12.2px;top:352.3px;font-size:6.45px"><u>3</u>D Display</div>
<div class="t" style="left:2.8000000000000003px;top:367.9px;">Activate:</div>
<svg style="left:51.6px;top:369px" width="9" height="7" viewBox="0 0 9 7"><path d="M0.3 3.6C2 0.6 7 0.6 8.7 3.6C7 5.6 2 5.6 0.3 3.6Z" fill="#4a4a4a"/><circle cx="4.5" cy="3.3" r="1.5" fill="#1a1a1a"/><path d="M0.6 1.8C2.6 -0.2 6.4 -0.2 8.4 1.8" stroke="#333" stroke-width="0.7" fill="none"/><path d="M2.6 5.4L2 6.6M4.5 5.6V6.8M6.4 5.4L7 6.6" stroke="#666" stroke-width="0.4"/></svg>
<div class="t" style="left:2.8000000000000003px;top:385.79999999999995px;">2D/3D:</div>
<svg style="left:49px;top:381px" width="256" height="18" viewBox="0 0 256 18"><rect x="1.40" y="1.00" width="253.60" height="15.30" rx="1.8" fill="#fcfcfc" stroke="#cdcdcd" stroke-width="0.95"/></svg>
<svg style="left:151px;top:384.6px" width="10.4" height="10.4" viewBox="0 0 10.4 10.4"><path d="M1.2 5.2A4 4 0 0 1 8.4 2.8" stroke="#2a7de0" stroke-width="1.1" fill="none"/><path d="M9.2 5.2A4 4 0 0 1 2 7.6" stroke="#2a7de0" stroke-width="1.1" fill="none"/><path d="M9.6 0.8V4H6.4Z" fill="#2a7de0"/><path d="M0.8 9.6V6.4H4Z" fill="#2a7de0"/></svg>
<div class="t" style="left:163.2px;top:385.79999999999995px;">Synchornize</div>
<div class="t" style="left:2.8000000000000003px;top:403.59999999999997px;">Preset:</div>
<svg style="left:49px;top:398px" width="256" height="17" viewBox="0 0 256 17"><rect x="1.40" y="1.80" width="253.60" height="13.40" rx="1.8" fill="url(#gI)" stroke="#cbcbcb" stroke-width="0.95"/></svg>
<svg style="left:53.4px;top:402.8px" width="8.4" height="8.6" viewBox="0 0 8.4 8.6"><rect width="8.4" height="8.6" fill="#0c0806"/><ellipse cx="4" cy="4.2" rx="2.2" ry="2.8" fill="#8a2a10"/><ellipse cx="3.8" cy="3.8" rx="1.2" ry="1.6" fill="#9a9a30"/><circle cx="5.6" cy="5.6" r="0.8" fill="#c03a1a"/></svg>
<div class="t" style="left:63.4px;top:403.59999999999997px;">BrightSurfaces</div>
<svg style="left:296.33px;top:406.38px" width="3.74" height="2.21" viewBox="0 0 4.4 2.6"><path d="M0 0H4.4L2.2 2.6Z" fill="#3a3a3a"/></svg>
<svg style="left:0;top:0" width="316" height="529" viewBox="0 0 316 529"><rect x="1.6" y="418.65" width="248.3" height="14.7" fill="none" stroke="#1212f0" stroke-width="1.5"/></svg>
<div class="t" style="left:2.8000000000000003px;top:421.2px;">3D Threshold:</div>
<div class="trk" style="left:50.8px;top:424.6px;width:104.2px"></div>
<div class="fil" style="left:50.8px;top:424.3px;width:13.200000000000003px"></div>
<div class="knob" style="left:61px;top:422.6px"></div>
<svg style="left:156px;top:419px" width="93" height="13" viewBox="0 0 93 13"><rect x="1.60" y="1.60" width="89.60" height="10.00" rx="1.8" fill="#fff" stroke="#cbcbcb" stroke-width="0.95"/></svg>
<div class="t" style="left:159.79999999999998px;top:421.2px;">0.001291550&nbsp; JY/BEAM</div>
<svg style="left:241.7px;top:421.5px" width="4.6" height="8.2" viewBox="0 0 4 7.2"><path d="M0 2.6L2 0.4L4 2.6ZM0 4.6L2 6.8L4 4.6Z" fill="#2e2e2e"/></svg>
<svg style="left:250px;top:417px" width="55" height="18" viewBox="0 0 55 18"><rect x="1.60" y="1.20" width="51.60" height="15.20" rx="1.8" fill="url(#gB)" stroke="#cdcdcd" stroke-width="0.95"/></svg>
<svg style="left:254.6px;top:420.6px" width="10.6" height="10.6" viewBox="0 0 10.6 10.6"><rect x="0.5" y="0.5" width="9.6" height="9.6" fill="#fafafa" stroke="#bbb" stroke-width="0.5" stroke-dasharray="1.6 1.2"/><circle cx="5.3" cy="5.3" r="3.3" fill="#fff" stroke="#c8c8d4" stroke-width="0.6"/><circle cx="5.3" cy="5.3" r="1.3" fill="#e01030"/></svg>
<div class="t" style="left:265.8px;top:421.2px;">RMS in ROI</div>
<div class="t" style="left:2.8000000000000003px;top:439.0px;">Shift:</div>
<div class="trk" style="left:50.8px;top:442.2px;width:192.2px"></div>
<div class="fil" style="left:50.8px;top:441.9px;width:38.8px"></div>
<div class="knob" style="left:86.6px;top:440.2px"></div>
<svg style="left:178px;top:436px" width="93" height="14" viewBox="0 0 93 14"><rect x="1.40" y="1.70" width="89.80" height="11.00" rx="1.8" fill="#fff" stroke="#cbcbcb" stroke-width="0.95"/></svg>
<div class="t" style="left:181.79999999999998px;top:438.79999999999995px;">-0.005600</div>
<svg style="left:263.7px;top:439.09999999999997px" width="4.6" height="8.2" viewBox="0 0 4 7.2"><path d="M0 2.6L2 0.4L4 2.6ZM0 4.6L2 6.8L4 4.6Z" fill="#2e2e2e"/></svg>
<svg style="left:271px;top:435px" width="34" height="36" viewBox="0 0 34 36"><rect x="1.60" y="1.00" width="30.60" height="34.00" rx="1.8" fill="url(#gB)" stroke="#cdcdcd" stroke-width="0.95"/></svg>
<svg style="left:280.4px;top:439.6px" width="16" height="24" viewBox="0 0 16 24"><path d="M3 9.6V6.4A5 5 0 0 1 13.2 6.4V7.6" stroke="#1f78c8" stroke-width="2.2" fill="none"/><rect x="0.6" y="9.6" width="14.8" height="13.6" rx="1.2" fill="#1f78c8"/><circle cx="8" cy="14.6" r="1.6" fill="#fff"/><rect x="7.2" y="15" width="1.6" height="4.6" fill="#fff"/></svg>
<div class="t" style="left:2.8000000000000003px;top:456.4px;">Stretch:</div>
<div class="trk" style="left:50.8px;top:459.6px;width:192.2px"></div>
<div class="fil" style="left:50.8px;top:459.3px;width:38.8px"></div>
<div class="knob" style="left:86.6px;top:457.6px"></div>
<svg style="left:178px;top:454px" width="93" height="14" viewBox="0 0 93 14"><rect x="1.40" y="1.20" width="89.80" height="11.00" rx="1.8" fill="#fff" stroke="#cbcbcb" stroke-width="0.95"/></svg>
<div class="t" style="left:181.79999999999998px;top:456.4px;">-0.005600</div>
<svg style="left:263.7px;top:456.7px" width="4.6" height="8.2" viewBox="0 0 4 7.2"><path d="M0 2.6L2 0.4L4 2.6ZM0 4.6L2 6.8L4 4.6Z" fill="#2e2e2e"/></svg>
<div class="a" style="left:306px;top:81.5px;width:8.399999999999977px;height:379.5px;background:#fefefe;border-left:1px solid #dcdcdc"></div>
<div class="a" style="left:307px;top:89.4px;width:7px;height:45.0px;background:#f0f0f0;border:0.6px solid #dcdcdc"></div>
<div class="a" style="left:307px;top:394px;width:7px;height:59px;background:#eeeeee"></div>
<svg style="left:307.8px;top:84.4px" width="4.6" height="2.8" viewBox="0 0 4.6 2.8"><path d="M0 2.8H4.6L2.3 0Z" fill="#333"/></svg>
<svg style="left:307.8px;top:456.2px" width="4.6" height="2.8" viewBox="0 0 4.6 2.8"><path d="M0 0H4.6L2.3 2.8Z" fill="#333"/></svg>
</div></div>
<svg style="left:0px;top:461px" width="315" height="12" viewBox="0 0 315 12"><rect x="1.40" y="1.40" width="312.40" height="9.40" rx="1.3" fill="url(#gH)" stroke="#d2d2d2" stroke-width="0.95"/></svg>
<svg style="left:3.7px;top:466.1px" width="4.4" height="2.6" viewBox="0 0 4.4 2.6"><path d="M0 0H4.4L2.2 2.6Z" fill="#2a2a2a"/></svg>
<div class="t" style="left:12.2px;top:462.79999999999995px;font-size:6.45px">Data Probe</div>
<div class="a" style="left:6.2px;top:480.4px;width:6.8px;height:7.0px;border:1px solid #d4d4d4;border-radius:1px;background:#fff"></div>
<div class="t" style="left:15.999999999999998px;top:479.4px;font-size:6.45px">Show <u>Z</u>oomed Slice</div>
<div class="t" style="left:8.799999999999999px;top:493.79999999999995px;font-size:6.2px">L</div>
<div class="t" style="left:8.799999999999999px;top:503.59999999999997px;font-size:6.2px">F</div>
<div class="t" style="left:8.799999999999999px;top:513.4px;font-size:6.2px">B</div>
<div class="a" style="left:317px;top:32px;width:683px;height:497px;background:#000"></div>
<svg style="left:317px;top:32px" width="342" height="9" viewBox="317 32 342 9"><defs><linearGradient id="g3d" x1="0" y1="0" x2="0" y2="1"><stop offset="0" stop-color="#6670c6"/><stop offset="1" stop-color="#808cf5"/></linearGradient><linearGradient id="gpl" x1="0" y1="0" x2="0" y2="1"><stop offset="0" stop-color="#24c8d4"/><stop offset="1" stop-color="#14b8c8"/></linearGradient></defs><rect x="317" y="32.15" width="342" height="8.55" fill="url(#g3d)"/></svg>
<svg style="left:317px;top:32.2px" width="30" height="8.4" viewBox="0 0 30 8.4"><path d="M2.9 4.1H4.6M4.6 2.9V5.3M4.6 3.4H7V4.8H4.6" stroke="#3e437e" stroke-width="0.7" fill="#3e437e"/><rect x="9.1" y="0.3" width="8.8" height="7.9" fill="#aab1f8"/><text x="13.5" y="6.7" font-size="6.9" font-family="DejaVu Sans,sans-serif" text-anchor="middle" fill="#1e1e2a">1</text><circle cx="23.2" cy="4.1" r="2.3" fill="#737ad0" stroke="#5a60a6" stroke-width="0.8"/><path d="M23.2 0.7V7.5M19.8 4.1H26.6" stroke="#5a60a6" stroke-width="0.6"/></svg>
<svg style="left:317px;top:40.5px;overflow:hidden" width="342" height="240" viewBox="317 40.5 342 240"><defs><filter id="b1" x="-30%" y="-30%" width="160%" height="160%"><feGaussianBlur stdDeviation="1.1"/></filter><filter id="b2" x="-30%" y="-30%" width="160%" height="160%"><feGaussianBlur stdDeviation="0.7"/></filter></defs><g fill="none" stroke="#9a0a9a" stroke-width="0.95" stroke-linejoin="round"><path d="M343.4 64.2L625.6 50.8L627.1 267.1L355.3 265.2Z"/><path d="M374 73.2L611.8 61.8L613.6 243.7L383.1 243.4Z"/><path d="M343.4 64.2L374 73.2M625.6 50.8L611.8 61.8M627.1 267.1L613.6 243.7M355.3 265.2L383.1 243.4"/></g><g filter="url(#b2)" stroke-linejoin="round"><path d="M433.6 118.6C437 113.6 445 115 449 120.4C454 119.6 458 124 457.6 131C458.6 136 459.6 141 461 144C461.6 149 459 154 456.6 157C455 163 450 168.4 445.4 170.4C439.6 168 433.6 160 434.6 152C432.6 149 435 145 437.6 141.6C433.6 135 432.6 125 433.6 118.6Z" fill="#560a0a" stroke="#c41410" stroke-width="0.9"/><path d="M402.4 146C401.4 138 406 130.6 416 128" fill="none" stroke="#4a0808" stroke-width="3.4" stroke-linecap="round"/><path d="M406.6 136.6C409.6 131.6 413 130 416 129.4" fill="none" stroke="#a01010" stroke-width="0.8" opacity="0.8"/><ellipse cx="402.8" cy="140.6" rx="2.6" ry="6.4" transform="rotate(8 402.8 140.6)" fill="#5a0a0a" stroke="#c41410" stroke-width="0.9" stroke-opacity="0.8"/><ellipse cx="418.4" cy="129.6" rx="4.2" ry="3.6" transform="rotate(-20 418.4 129.6)" fill="#5a0a0a" stroke="#c41410" stroke-width="0.9" stroke-opacity="0.8"/><ellipse cx="407" cy="160.4" rx="1.7" ry="5.6" transform="rotate(-20 407 160.4)" fill="#5a0a0a" stroke="#c41410" stroke-width="0.9" stroke-opacity="0.6"/><ellipse cx="430" cy="147.6" rx="4.4" ry="1.6" transform="rotate(30 430 147.6)" fill="#7a0c0c" stroke="#c41410" stroke-width="0.9" stroke-opacity="0.8"/><ellipse cx="427.4" cy="141" rx="1.5" ry="2.2" fill="#5a0a0a"/><ellipse cx="419" cy="144" rx="0.9" ry="0.9" fill="#4a0808"/><ellipse cx="453.6" cy="174" rx="3.2" ry="2.2" transform="rotate(28 453.6 174)" fill="#5a0a0a" stroke="#c41410" stroke-width="0.9" stroke-opacity="0.7"/><ellipse cx="460.6" cy="131.6" rx="0.9" ry="4.6" fill="#6a0c0c"/><path d="M440.6 125.6C443 121.6 450 121.4 452 125.6C454 131.6 453.6 138 450.6 141C446.6 142.4 442 140.4 440.6 136Z" fill="#6e4c0e" stroke="#9a8a14" stroke-width="0.7" opacity="0.9"/><path d="M438 150C440 145.6 447 145.4 450 149.6C452.6 155 450 163 445.4 166.4C440.6 165.4 437 158 438 150Z" fill="#7a4a0c" stroke="#a89414" stroke-width="0.8" opacity="0.9"/><path d="M441.6 152C443 149.4 445 150 445 153C444.6 156 446.6 158 446.6 161C445.6 164 442.6 163 442 160C441 157 441 154 441.6 152Z" fill="none" stroke="#b4a418" stroke-width="0.7"/><ellipse cx="449.6" cy="155.4" rx="1.4" ry="2.2" fill="#8a6a10" stroke="#a89414" stroke-width="0.5"/><path d="M434.6 142.6C439 145 446 143 452.6 139M437 147C441 146 447 144 451 141.6" stroke="#e01616" stroke-width="1" fill="none"/><path d="M452 150C455 148 457.6 144 458.6 139" stroke="#b01212" stroke-width="0.8" fill="none"/><ellipse cx="446.4" cy="127" rx="2.1" ry="2.3" fill="#2a9076" opacity="0.9"/><ellipse cx="448.2" cy="135.4" rx="2.1" ry="2.1" fill="#2c8a7c" opacity="0.9"/><ellipse cx="402.8" cy="139" rx="1.5" ry="3.6" fill="#6a4a0e"/><ellipse cx="418.6" cy="129.6" rx="2.3" ry="1.8" fill="#6a3a0e"/><path d="M550.6 133C553.6 130 558 131 559 137C560 141 562.4 143 564 147C566 153 565 159.6 562 160.4C558 160.4 555 156 554 150C552 146 549.6 140 550.6 133Z" fill="#7a0e0c" stroke="#c41410" stroke-width="0.9"/><ellipse cx="555" cy="138" rx="2.1" ry="4.4" transform="rotate(-12 555 138)" fill="#8a7a1a"/><ellipse cx="559.8" cy="151" rx="2.5" ry="4" transform="rotate(-12 559.8 151)" fill="#7a8a20"/><ellipse cx="559.8" cy="151" rx="1.2" ry="1.8" fill="#4a9a2a"/><path d="M554.6 143.6L560.6 146.4" stroke="#f02a10" stroke-width="1.5"/><path d="M521.4 146.6L524.4 150.6L529.4 148.4L525 152.4Z" fill="#5a0a0a"/><ellipse cx="489.4" cy="244" rx="1.2" ry="3.2" transform="rotate(25 489.4 244)" fill="#a01212"/><ellipse cx="478.6" cy="255" rx="1.2" ry="3.2" transform="rotate(25 478.6 255)" fill="#a01212"/><circle cx="496" cy="245" r="0.6" fill="#5a0a0a"/></g><text x="478.6" y="49.4" font-size="20" font-family="Liberation Sans,sans-serif" fill="#fff">N</text><text x="341.6" y="169.7" font-size="19.5" font-family="Liberation Sans,sans-serif" fill="#fff">E</text><text x="488.8" y="161.9" font-size="18" font-family="Liberation Sans,sans-serif" fill="#fff">Z</text><text x="633.6" y="163.4" font-size="20.5" font-family="Liberation Sans,sans-serif" fill="#fff">W</text><text x="486.2" y="278.5" font-size="19" font-family="Liberation Sans,sans-serif" fill="#fff">S</text></svg>
<svg style="left:659px;top:32px" width="341" height="9" viewBox="659 32 341 9"><rect x="659" y="32.15" width="341" height="8.55" fill="url(#gpl)"/></svg>
<svg style="left:659px;top:32.2px" width="30" height="8.4" viewBox="0 0 30 8.4"><path d="M2.9 4.1H4.6M4.6 2.9V5.3M4.6 3.4H6.8V4.8H4.6" stroke="#0c5660" stroke-width="0.7" fill="#0c5660"/><rect x="9" y="0.2" width="8.9" height="8" fill="#34eef8"/><text x="13.45" y="6.7" font-size="6.9" font-family="DejaVu Sans,sans-serif" text-anchor="middle" fill="#10262a">1</text><rect x="20.6" y="1.3" width="4.8" height="5.6" rx="0.8" fill="#0a4852"/><path d="M20 3.2H26M21.6 1.6V3" stroke="#0a4852" stroke-width="0.6"/><path d="M22 2.4H23.4" stroke="#8ee" stroke-width="0.6"/></svg>
<svg style="left:659px;top:40px" width="341" height="242" viewBox="659 40 341 242"><rect x="659" y="40.6" width="341" height="241" fill="#ffffff"/><rect x="685.3" y="40.6" width="314.7" height="216.7" fill="#fefdf6"/></svg>
<svg style="left:659px;top:40.5px" width="341" height="241" viewBox="659 40.5 341 241"><g stroke="#f2f0e9" stroke-width="0.7"><path d="M685.7 238.77H989.5"/><path d="M685.7 220.23H989.5"/><path d="M685.7 201.69H989.5"/><path d="M685.7 183.16H989.5"/><path d="M685.7 164.62H989.5"/><path d="M685.7 146.09H989.5"/><path d="M685.7 127.56H989.5"/><path d="M685.7 109.02H989.5"/><path d="M685.7 90.49H989.5"/><path d="M685.7 71.95H989.5"/><path d="M685.7 53.42H989.5"/><path d="M723.67 257.3V53.4"/><path d="M761.65 257.3V53.4"/><path d="M799.63 257.3V53.4"/><path d="M837.60 257.3V53.4"/><path d="M875.58 257.3V53.4"/><path d="M913.55 257.3V53.4"/><path d="M951.53 257.3V53.4"/><path d="M989.51 257.3V53.4"/></g><g fill="#e04c5a" stroke="#2a0c10" stroke-width="0.68"><rect x="718.85" y="235.06" width="2.667" height="22.24"/><rect x="721.52" y="228.57" width="2.667" height="28.73"/><rect x="724.18" y="209.11" width="2.667" height="48.19"/><rect x="726.85" y="185.01" width="2.667" height="72.29"/><rect x="729.52" y="169.63" width="2.667" height="87.67"/><rect x="732.19" y="151.28" width="2.667" height="106.02"/><rect x="734.85" y="137.19" width="2.667" height="120.11"/><rect x="737.52" y="123.85" width="2.667" height="133.45"/><rect x="740.19" y="111.61" width="2.667" height="145.69"/><rect x="742.85" y="100.86" width="2.667" height="156.44"/><rect x="745.52" y="91.23" width="2.667" height="166.07"/><rect x="748.19" y="83.44" width="2.667" height="173.86"/><rect x="750.85" y="77.14" width="2.667" height="180.16"/><rect x="753.52" y="73.06" width="2.667" height="184.24"/><rect x="756.19" y="70.10" width="2.667" height="187.20"/><rect x="758.86" y="68.76" width="2.667" height="188.54"/><rect x="761.52" y="69.73" width="2.667" height="187.57"/><rect x="764.19" y="71.95" width="2.667" height="185.35"/><rect x="766.86" y="75.66" width="2.667" height="181.64"/><rect x="769.52" y="81.59" width="2.667" height="175.71"/><rect x="772.19" y="88.63" width="2.667" height="168.67"/><rect x="774.86" y="97.16" width="2.667" height="160.14"/><rect x="777.52" y="106.80" width="2.667" height="150.50"/><rect x="780.19" y="117.92" width="2.667" height="139.38"/><rect x="782.86" y="129.04" width="2.667" height="128.26"/><rect x="785.52" y="139.05" width="2.667" height="118.25"/><rect x="788.19" y="147.31" width="2.667" height="109.99"/><rect x="790.86" y="152.02" width="2.667" height="105.28"/><rect x="793.53" y="155.17" width="2.667" height="102.13"/><rect x="796.19" y="157.21" width="2.667" height="100.09"/><rect x="798.86" y="158.81" width="2.667" height="98.49"/><rect x="801.53" y="159.62" width="2.667" height="97.68"/><rect x="804.19" y="160.18" width="2.667" height="97.12"/><rect x="806.86" y="162.03" width="2.667" height="95.27"/><rect x="809.53" y="164.25" width="2.667" height="93.05"/><rect x="812.20" y="166.48" width="2.667" height="90.82"/><rect x="814.86" y="168.33" width="2.667" height="88.97"/><rect x="817.53" y="167.70" width="2.667" height="89.60"/><rect x="820.20" y="169.07" width="2.667" height="88.23"/><rect x="822.86" y="171.37" width="2.667" height="85.93"/><rect x="825.53" y="172.41" width="2.667" height="84.89"/><rect x="828.20" y="175.00" width="2.667" height="82.30"/><rect x="830.86" y="174.15" width="2.667" height="83.15"/><rect x="833.53" y="176.56" width="2.667" height="80.74"/><rect x="836.20" y="178.34" width="2.667" height="78.96"/><rect x="838.87" y="177.41" width="2.667" height="79.89"/><rect x="841.53" y="182.60" width="2.667" height="74.70"/><rect x="844.20" y="181.16" width="2.667" height="76.14"/><rect x="846.87" y="181.79" width="2.667" height="75.51"/><rect x="849.53" y="179.60" width="2.667" height="77.70"/><rect x="852.20" y="183.53" width="2.667" height="73.77"/><rect x="854.87" y="183.83" width="2.667" height="73.47"/><rect x="857.53" y="187.09" width="2.667" height="70.21"/><rect x="860.20" y="187.09" width="2.667" height="70.21"/><rect x="862.87" y="191.46" width="2.667" height="65.84"/><rect x="865.54" y="186.50" width="2.667" height="70.80"/><rect x="868.20" y="191.69" width="2.667" height="65.61"/><rect x="870.87" y="190.57" width="2.667" height="66.73"/><rect x="873.54" y="193.98" width="2.667" height="63.32"/><rect x="876.20" y="192.32" width="2.667" height="64.98"/><rect x="878.87" y="195.02" width="2.667" height="62.28"/><rect x="881.54" y="196.88" width="2.667" height="60.42"/><rect x="884.20" y="200.40" width="2.667" height="56.90"/><rect x="886.87" y="197.99" width="2.667" height="59.31"/><rect x="889.54" y="199.47" width="2.667" height="57.83"/><rect x="892.21" y="200.03" width="2.667" height="57.27"/><rect x="894.87" y="202.21" width="2.667" height="55.09"/><rect x="897.54" y="205.59" width="2.667" height="51.71"/><rect x="900.21" y="209.22" width="2.667" height="48.08"/><rect x="902.87" y="207.89" width="2.667" height="49.41"/><rect x="905.54" y="206.81" width="2.667" height="50.49"/><rect x="908.21" y="216.52" width="2.667" height="40.78"/><rect x="910.87" y="213.93" width="2.667" height="43.37"/><rect x="913.54" y="206.22" width="2.667" height="51.08"/><rect x="916.21" y="220.38" width="2.667" height="36.92"/><rect x="918.88" y="226.42" width="2.667" height="30.88"/><rect x="921.54" y="222.27" width="2.667" height="35.03"/><rect x="924.21" y="246.44" width="2.667" height="10.86"/><rect x="926.88" y="226.49" width="2.667" height="30.81"/><rect x="929.54" y="235.32" width="2.667" height="21.98"/><rect x="932.21" y="239.80" width="2.667" height="17.50"/><rect x="934.88" y="226.49" width="2.667" height="30.81"/><rect x="937.54" y="235.32" width="2.667" height="21.98"/><rect x="940.21" y="235.32" width="2.667" height="21.98"/><rect x="942.88" y="246.44" width="2.667" height="10.86"/><rect x="945.55" y="239.80" width="2.667" height="17.50"/><rect x="948.21" y="235.32" width="2.667" height="21.98"/><rect x="950.88" y="239.80" width="2.667" height="17.50"/><rect x="956.21" y="239.80" width="2.667" height="17.50"/><rect x="958.88" y="246.44" width="2.667" height="10.86"/><rect x="972.22" y="246.44" width="2.667" height="10.86"/></g><path d="M685.7 53.2V257.3H989.5" stroke="#333" stroke-width="0.8" fill="none"/><g stroke="#333" stroke-width="0.6"><path d="M683.6 257.30H685.7"/><path d="M683.6 238.77H685.7"/><path d="M683.6 220.23H685.7"/><path d="M683.6 201.69H685.7"/><path d="M683.6 183.16H685.7"/><path d="M683.6 164.62H685.7"/><path d="M683.6 146.09H685.7"/><path d="M683.6 127.56H685.7"/><path d="M683.6 109.02H685.7"/><path d="M683.6 90.49H685.7"/><path d="M683.6 71.95H685.7"/><path d="M683.6 53.42H685.7"/><path d="M685.70 257.3v2"/><path d="M723.67 257.3v2"/><path d="M761.65 257.3v2"/><path d="M799.63 257.3v2"/><path d="M837.60 257.3v2"/><path d="M875.58 257.3v2"/><path d="M913.55 257.3v2"/><path d="M951.53 257.3v2"/><path d="M989.51 257.3v2"/></g><g font-size="7.2" font-family="Liberation Sans,sans-serif" fill="#333"><text x="681.9" y="259.85" text-anchor="end" textLength="3.7" lengthAdjust="spacingAndGlyphs">0</text><text x="681.9" y="241.32" text-anchor="end" textLength="9.2" lengthAdjust="spacingAndGlyphs">0.5</text><text x="681.9" y="222.78" text-anchor="end" textLength="3.7" lengthAdjust="spacingAndGlyphs">1</text><text x="681.9" y="204.25" text-anchor="end" textLength="9.2" lengthAdjust="spacingAndGlyphs">1.5</text><text x="681.9" y="185.71" text-anchor="end" textLength="3.7" lengthAdjust="spacingAndGlyphs">2</text><text x="681.9" y="167.18" text-anchor="end" textLength="9.2" lengthAdjust="spacingAndGlyphs">2.5</text><text x="681.9" y="148.64" text-anchor="end" textLength="3.7" lengthAdjust="spacingAndGlyphs">3</text><text x="681.9" y="130.11" text-anchor="end" textLength="9.2" lengthAdjust="spacingAndGlyphs">3.5</text><text x="681.9" y="111.57" text-anchor="end" textLength="3.7" lengthAdjust="spacingAndGlyphs">4</text><text x="681.9" y="93.04" text-anchor="end" textLength="9.2" lengthAdjust="spacingAndGlyphs">4.5</text><text x="681.9" y="74.50" text-anchor="end" textLength="3.7" lengthAdjust="spacingAndGlyphs">5</text><text x="681.9" y="55.97" text-anchor="end" textLength="9.2" lengthAdjust="spacingAndGlyphs">5.5</text><text x="685.70" y="265.8" text-anchor="middle" textLength="18.7" lengthAdjust="spacingAndGlyphs">-0.004</text><text x="723.67" y="265.8" text-anchor="middle" textLength="18.7" lengthAdjust="spacingAndGlyphs">-0.002</text><text x="761.65" y="265.8" text-anchor="middle" textLength="3.7" lengthAdjust="spacingAndGlyphs">0</text><text x="799.63" y="265.8" text-anchor="middle" textLength="16.5" lengthAdjust="spacingAndGlyphs">0.002</text><text x="837.60" y="265.8" text-anchor="middle" textLength="16.5" lengthAdjust="spacingAndGlyphs">0.004</text><text x="875.58" y="265.8" text-anchor="middle" textLength="16.5" lengthAdjust="spacingAndGlyphs">0.006</text><text x="913.55" y="265.8" text-anchor="middle" textLength="16.5" lengthAdjust="spacingAndGlyphs">0.008</text><text x="950.43" y="265.8" text-anchor="middle" textLength="12.8" lengthAdjust="spacingAndGlyphs">0.01</text><text x="989.51" y="265.8" text-anchor="middle" textLength="16.5" lengthAdjust="spacingAndGlyphs">0.012</text></g><path d="M744.5 257.3V68.7" stroke="#6cbd5c" stroke-width="2.1"/><circle cx="744.5" cy="68.7" r="2.5" fill="#6cbd5c"/><circle cx="744.5" cy="162.7" r="2.5" fill="#6cbd5c"/><circle cx="744.5" cy="256.5" r="1.9" fill="#6cbd5c"/><path d="M786.1 257.3V68.7" stroke="#fa9e4e" stroke-width="2.1"/><circle cx="786.1" cy="68.7" r="2.5" fill="#fa9e4e"/><circle cx="786.1" cy="162.7" r="2.5" fill="#fa9e4e"/><circle cx="786.1" cy="256.5" r="1.9" fill="#fa9e4e"/><path d="M883.1 257.3V68.7" stroke="#4d92d2" stroke-width="2.1"/><circle cx="883.1" cy="68.7" r="2.5" fill="#4d92d2"/><circle cx="883.1" cy="162.7" r="2.5" fill="#4d92d2"/><circle cx="883.1" cy="256.5" r="1.9" fill="#4d92d2"/><text x="837.4" y="50.7" font-size="11.6" font-family="Liberation Sans,sans-serif" fill="#333" text-anchor="middle">Histogram</text><text x="837.6" y="275.3" font-size="9.4" font-family="Liberation Sans,sans-serif" fill="#333" text-anchor="middle">Intensity (Jy/beam)</text><text transform="translate(669.4 155.4) rotate(-90)" font-size="9.15" font-family="Liberation Sans,sans-serif" fill="#333" text-anchor="middle">Log10(#)</text><rect x="908.1" y="53.3" width="81.7" height="39.8" fill="#fff" stroke="#333" stroke-width="0.6"/><rect x="911.2" y="56.4" width="11.6" height="6.4" fill="#f0566a" stroke="#5a1018" stroke-width="0.6"/><path d="M911 68.3H923" stroke="#6cbd5c" stroke-width="1.7"/><ellipse cx="917" cy="68.3" rx="2.4" ry="1.9" fill="#6cbd5c"/><path d="M911 77.3H923" stroke="#4d92d2" stroke-width="1.7"/><ellipse cx="917" cy="77.3" rx="2.4" ry="1.9" fill="#4d92d2"/><path d="M911 86.3H923" stroke="#fa9e4e" stroke-width="1.7"/><ellipse cx="917" cy="86.3" rx="2.4" ry="1.9" fill="#fa9e4e"/><g font-size="6.6" font-family="Liberation Sans,sans-serif" fill="#222"><text x="925" y="61.6">WEIN069_Histogram</text><text x="925" y="70.6">Min</text><text x="925" y="79.6">Max</text><text x="925" y="88.6">3DDisplayThreshold</text></g></svg>
<svg style="left:317px;top:280px" width="683" height="3" viewBox="317 280 683 3"><rect x="317" y="280.1" width="683" height="2.3" fill="#5c6074"/></svg>
<svg style="left:317px;top:281px" width="227.39999999999998" height="11" viewBox="317 281 227.39999999999998 11"><defs><linearGradient id="gr" x1="0" y1="0" x2="0" y2="1"><stop offset="0" stop-color="#f5513a"/><stop offset="1" stop-color="#ee4630"/></linearGradient></defs><rect x="317" y="282.2" width="227.39999999999998" height="8.7" fill="url(#gr)"/><g transform="translate(0 282.2)"><path d="M319.9 4.3h1.7M321.6 3.1v2.4M321.6 3.6h2.2v1.4h-2.2" stroke="#4a2a1a" stroke-width="0.7" fill="#4a2a1a" opacity="0.85"/><rect x="326.1" y="0.2" width="8.8" height="8.3" fill="#fff" opacity="0.34"/><text x="330.5" y="6.9" font-size="6.7" font-family="DejaVu Sans,sans-serif" text-anchor="middle" fill="#3a1a12">R</text><rect x="337.6" y="1.4" width="5" height="5.8" rx="1" fill="#5a1a10" opacity="0.75"/><path d="M336.8 3.4h6.6" stroke="#5a1a10" stroke-width="0.6" opacity="0.7"/><rect x="348.8" y="3.2" width="134.39999999999998" height="2.2" rx="1.1" fill="#f6f6f6" stroke="#4a4a4a" stroke-width="0.45"/><rect x="348.8" y="3.2" width="67.0" height="2.2" rx="1.1" fill="#3a92da" stroke="#2a4a6a" stroke-width="0.5"/><rect x="413.7" y="1.1" width="4.2" height="6.5" rx="0.7" fill="#fff" stroke="#8a8a8a" stroke-width="0.5"/><text x="486.8" y="6.8" font-size="6.42" font-family="DejaVu Sans,sans-serif" fill="#26180c">5169.6 km/s</text></g></svg>
<svg style="left:544.4px;top:281px" width="229.0" height="11" viewBox="544.4 281 229.0 11"><defs><linearGradient id="gy" x1="0" y1="0" x2="0" y2="1"><stop offset="0" stop-color="#f0da50"/><stop offset="1" stop-color="#e8ce3e"/></linearGradient></defs><rect x="544.4" y="282.2" width="229.0" height="8.7" fill="url(#gy)"/><g transform="translate(0 282.2)"><path d="M547.3 4.3h1.7M549.0 3.1v2.4M549.0 3.6h2.2v1.4h-2.2" stroke="#4a2a1a" stroke-width="0.7" fill="#4a2a1a" opacity="0.85"/><rect x="553.5" y="0.2" width="8.8" height="8.3" fill="#fff" opacity="0.34"/><text x="557.9" y="6.9" font-size="6.7" font-family="DejaVu Sans,sans-serif" text-anchor="middle" fill="#3a1a12">Y</text><rect x="565.0" y="1.4" width="5" height="5.8" rx="1" fill="#4a3c10" opacity="0.75"/><path d="M564.1999999999999 3.4h6.6" stroke="#4a3c10" stroke-width="0.6" opacity="0.7"/><rect x="577" y="3.2" width="135" height="2.2" rx="1.1" fill="#f6f6f6" stroke="#4a4a4a" stroke-width="0.45"/><rect x="577" y="3.2" width="73" height="2.2" rx="1.1" fill="#3a92da" stroke="#2a4a6a" stroke-width="0.5"/><rect x="647.9" y="1.1" width="4.2" height="6.5" rx="0.7" fill="#fff" stroke="#8a8a8a" stroke-width="0.5"/><text x="716" y="6.8" font-size="6.42" font-family="DejaVu Sans,sans-serif" fill="#26180c">4h 40m 0s</text></g></svg>
<svg style="left:773.4px;top:281px" width="226.60000000000002" height="11" viewBox="773.4 281 226.60000000000002 11"><defs><linearGradient id="gg" x1="0" y1="0" x2="0" y2="1"><stop offset="0" stop-color="#78ba54"/><stop offset="1" stop-color="#6aac48"/></linearGradient></defs><rect x="773.4" y="282.2" width="226.60000000000002" height="8.7" fill="url(#gg)"/><g transform="translate(0 282.2)"><path d="M776.3 4.3h1.7M778.0 3.1v2.4M778.0 3.6h2.2v1.4h-2.2" stroke="#4a2a1a" stroke-width="0.7" fill="#4a2a1a" opacity="0.85"/><rect x="782.5" y="0.2" width="8.8" height="8.3" fill="#fff" opacity="0.34"/><text x="786.9" y="6.9" font-size="6.7" font-family="DejaVu Sans,sans-serif" text-anchor="middle" fill="#3a1a12">G</text><rect x="794.0" y="1.4" width="5" height="5.8" rx="1" fill="#24401a" opacity="0.75"/><path d="M793.1999999999999 3.4h6.6" stroke="#24401a" stroke-width="0.6" opacity="0.7"/><rect x="804.4" y="3.2" width="134.20000000000005" height="2.2" rx="1.1" fill="#f6f6f6" stroke="#4a4a4a" stroke-width="0.45"/><rect x="804.4" y="3.2" width="66.39999999999998" height="2.2" rx="1.1" fill="#3a92da" stroke="#2a4a6a" stroke-width="0.5"/><rect x="868.6999999999999" y="1.1" width="4.2" height="6.5" rx="0.7" fill="#fff" stroke="#8a8a8a" stroke-width="0.5"/><text x="940.8" y="6.8" font-size="6.42" font-family="DejaVu Sans,sans-serif" fill="#26180c">4h 51m 30.664s</text></g></svg>
<div class="a" style="left:544px;top:291px;width:1px;height:238px;background:#343434"></div>
<div class="a" style="left:773px;top:291px;width:1px;height:238px;background:#343434"></div>
<svg style="left:317px;top:325.4px" width="226.20000000000005" height="170.40000000000003" viewBox="0 0 226.20000000000005 170.40000000000003"><defs><filter id="nr" x="0" y="0" width="100%" height="100%" color-interpolation-filters="sRGB"><feTurbulence type="fractalNoise" baseFrequency="0.19 0.14" numOctaves="2" seed="3" result="n"/><feColorMatrix type="matrix" values="1.55 0 0 0 -0.41  1.55 0 0 0 -0.41  1.55 0 0 0 -0.41  0 0 0 0 1"/><feComponentTransfer><feFuncR type="table" tableValues="0 0 0 0.01 0.02 0.04 0.08 0.3"/><feFuncG type="table" tableValues="0 0.035 0.09 0.15 0.22 0.3 0.42 0.66"/><feFuncB type="table" tableValues="0 0.23 0.42 0.57 0.69 0.8 0.91 1"/></feComponentTransfer></filter><radialGradient id="blnr"><stop offset="0" stop-color="#fff"/><stop offset="0.2" stop-color="#eaf6ff"/><stop offset="0.4" stop-color="#7cc0ff" stop-opacity="0.95"/><stop offset="0.65" stop-color="#2a84ff" stop-opacity="0.75"/><stop offset="1" stop-color="#0a50e0" stop-opacity="0"/></radialGradient><radialGradient id="bdnr"><stop offset="0" stop-color="#3c9cff" stop-opacity="1"/><stop offset="0.45" stop-color="#1a70f4" stop-opacity="0.8"/><stop offset="1" stop-color="#0a48d0" stop-opacity="0"/></radialGradient></defs><rect width="226.20000000000005" height="170.40000000000003" filter="url(#nr)"/><ellipse cx="37.6" cy="64.0" rx="8.5" ry="8" fill="url(#blnr)"/><ellipse cx="51.0" cy="65.2" rx="8" ry="6" fill="url(#bdnr)"/><ellipse cx="81.4" cy="69.0" rx="8.5" ry="7.5" fill="url(#blnr)"/><ellipse cx="67.0" cy="71.0" rx="9" ry="6.5" fill="url(#bdnr)"/><ellipse cx="89.0" cy="72.6" rx="6" ry="6" fill="url(#bdnr)"/><ellipse cx="176.8" cy="76.6" rx="8" ry="9" fill="url(#blnr)"/><ellipse cx="178.0" cy="84.6" rx="5" ry="6" fill="url(#bdnr)"/><ellipse cx="109.4" cy="164.2" rx="5.5" ry="5" fill="url(#bdnr)"/><ellipse cx="124.8" cy="88.6" rx="5.5" ry="5.5" fill="url(#bdnr)"/><ellipse cx="188.0" cy="93.6" rx="5" ry="5.5" fill="url(#bdnr)"/><ellipse cx="118.0" cy="94.6" rx="4" ry="4" fill="url(#bdnr)"/></svg>
<svg style="left:545.2px;top:375.8px" width="227.19999999999993" height="68.80000000000001" viewBox="0 0 227.19999999999993 68.80000000000001"><defs><filter id="ny" x="0" y="0" width="100%" height="100%" color-interpolation-filters="sRGB"><feTurbulence type="fractalNoise" baseFrequency="0.18 0.15" numOctaves="2" seed="11" result="n"/><feColorMatrix type="matrix" values="1.55 0 0 0 -0.41  1.55 0 0 0 -0.41  1.55 0 0 0 -0.41  0 0 0 0 1"/><feComponentTransfer><feFuncR type="table" tableValues="0 0 0 0.01 0.02 0.04 0.08 0.3"/><feFuncG type="table" tableValues="0 0.035 0.09 0.15 0.22 0.3 0.42 0.66"/><feFuncB type="table" tableValues="0 0.23 0.42 0.57 0.69 0.8 0.91 1"/></feComponentTransfer></filter><radialGradient id="blny"><stop offset="0" stop-color="#fff"/><stop offset="0.2" stop-color="#eaf6ff"/><stop offset="0.4" stop-color="#7cc0ff" stop-opacity="0.95"/><stop offset="0.65" stop-color="#2a84ff" stop-opacity="0.75"/><stop offset="1" stop-color="#0a50e0" stop-opacity="0"/></radialGradient><radialGradient id="bdny"><stop offset="0" stop-color="#3c9cff" stop-opacity="1"/><stop offset="0.45" stop-color="#1a70f4" stop-opacity="0.8"/><stop offset="1" stop-color="#0a48d0" stop-opacity="0"/></radialGradient></defs><rect width="227.19999999999993" height="68.80000000000001" filter="url(#ny)"/><ellipse cx="74.2" cy="16.8" rx="10" ry="8" fill="url(#blny)"/><ellipse cx="42.8" cy="26.2" rx="8" ry="6.5" fill="url(#bdny)"/><ellipse cx="177.2" cy="29.8" rx="6" ry="7.5" fill="url(#bdny)"/><ellipse cx="63.8" cy="13.2" rx="6" ry="5.5" fill="url(#bdny)"/></svg>
<svg style="left:838.2px;top:290.4px" width="97.19999999999993" height="238.60000000000002" viewBox="0 0 97.19999999999993 238.60000000000002"><defs><filter id="ng" x="0" y="0" width="100%" height="100%" color-interpolation-filters="sRGB"><feTurbulence type="fractalNoise" baseFrequency="0.14 0.075" numOctaves="2" seed="5" result="n"/><feColorMatrix type="matrix" values="1.55 0 0 0 -0.41  1.55 0 0 0 -0.41  1.55 0 0 0 -0.41  0 0 0 0 1"/><feComponentTransfer><feFuncR type="table" tableValues="0 0 0 0.01 0.02 0.04 0.08 0.3"/><feFuncG type="table" tableValues="0 0.035 0.09 0.15 0.22 0.3 0.42 0.66"/><feFuncB type="table" tableValues="0 0.23 0.42 0.57 0.69 0.8 0.91 1"/></feComponentTransfer></filter><radialGradient id="blng"><stop offset="0" stop-color="#fff"/><stop offset="0.2" stop-color="#eaf6ff"/><stop offset="0.4" stop-color="#7cc0ff" stop-opacity="0.95"/><stop offset="0.65" stop-color="#2a84ff" stop-opacity="0.75"/><stop offset="1" stop-color="#0a50e0" stop-opacity="0"/></radialGradient><radialGradient id="bdng"><stop offset="0" stop-color="#3c9cff" stop-opacity="1"/><stop offset="0.45" stop-color="#1a70f4" stop-opacity="0.8"/><stop offset="1" stop-color="#0a48d0" stop-opacity="0"/></radialGradient></defs><rect width="97.19999999999993" height="238.60000000000002" filter="url(#ng)"/><ellipse cx="68.6" cy="230.6" rx="10" ry="8" fill="url(#bdng)"/><ellipse cx="69.2" cy="230.6" rx="6" ry="5" fill="url(#bdng)"/><ellipse cx="61.8" cy="233.6" rx="6" ry="5" fill="url(#bdng)"/></svg>
<svg style="left:0;top:0" width="1000" height="529" viewBox="0 0 1000 529"><g stroke="#12e2e8" stroke-width="1.7" fill="none"><path d="M293.6 274.0L589.5 297.1"/><path d="M250.4 430.7L590 325.8"/></g><path d="M745.8 275V261" stroke="#1a1af0" stroke-width="1.3"/><path d="M745.8 258.2L742.6 263.6L745.8 262.4L749 263.6Z" fill="#1a1af0" stroke="#1a1af0" stroke-width="0.6"/></svg>
<svg style="left:0;top:0" width="1000" height="529" viewBox="0 0 1000 529"><rect x="590.0" y="274.7" width="209.4" height="51.4" fill="#fff" stroke="#1616f4" stroke-width="1.9"/></svg>
<div class="a" style="left:590.6px;top:275.5px;width:208px;font-family:'Liberation Sans',sans-serif;font-size:14.53px;line-height:16.65px;color:#000;white-space:nowrap">Interactive lines: click and drag<br>to modify the values (the key 'S'<br>change the selection mode).</div>
</div></body></html>
